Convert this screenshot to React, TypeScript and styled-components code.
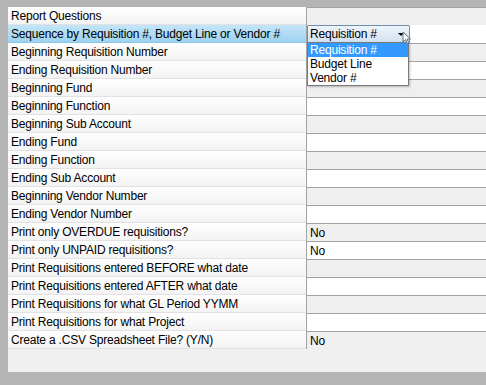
import styled, { createGlobalStyle } from 'styled-components';

const GlobalStyle = createGlobalStyle`
  html, body {
    margin: 0;
    padding: 0;
    background: #b4b4b4;
    font-family: "Liberation Sans", Arial, sans-serif;
  }
`

interface Question {
  label: string
  value?: string
}

const questions: Question[] = [
  { label: 'Report Questions' },
  { label: 'Sequence by Requisition #, Budget Line or Vendor #' },
  { label: 'Beginning Requisition Number' },
  { label: 'Ending Requisition Number' },
  { label: 'Beginning Fund' },
  { label: 'Beginning Function' },
  { label: 'Beginning Sub Account' },
  { label: 'Ending Fund' },
  { label: 'Ending Function' },
  { label: 'Ending Sub Account' },
  { label: 'Beginning Vendor Number' },
  { label: 'Ending Vendor Number' },
  { label: 'Print only OVERDUE requisitions?', value: 'No' },
  { label: 'Print only UNPAID requisitions?', value: 'No' },
  { label: 'Print Requisitions entered BEFORE what date' },
  { label: 'Print Requisitions entered AFTER what date' },
  { label: 'Print Requisitions for what GL Period YYMM' },
  { label: 'Print Requisitions for what Project' },
  { label: 'Create a .CSV Spreadsheet File? (Y/N)', value: 'No' },
]

const options = ['Requisition #', 'Budget Line', 'Vendor #']

const Frame = styled.div`
  padding: 7px 0 13px 8px;
`

const Panel = styled.div`
  background: #f0f0f0;
  height: 365px;
  display: flex;
  flex-direction: column;
`

const Row = styled.div`
  display: grid;
  grid-template-columns: 298px 1fr;
  height: 18px;
  font-size: 12px;
  letter-spacing: -0.2px;
  color: #000;
`

const Label = styled.div<{ $active?: boolean }>`
  display: flex;
  align-items: center;
  padding-left: 3px;
  padding-top: 1px;
  white-space: nowrap;
  border-bottom: 1px solid ${p => (p.$active ? '#8cc6e8' : '#e2e2e2')};
  background: ${p =>
    p.$active
      ? 'linear-gradient(#c4e5f8, #9dd2f0)'
      : 'linear-gradient(#ffffff, #f3f3f3)'};
`

const Value = styled.div<{ $shaded: boolean }>`
  position: relative;
  display: flex;
  align-items: center;
  padding-left: 3px;
  border-left: 1px solid #a3a3a3;
  border-top: 1px solid #a3a3a3;
  background: ${p => (p.$shaded ? '#efefef' : '#ffffff')};
`

const ComboCell = styled.div`
  position: relative;
  border-left: 1px solid #a3a3a3;
  background: #ffffff;
`

const Combo = styled.div`
  width: 99px;
  height: 16px;
  border: 1px solid #6f8fb0;
  border-radius: 1px;
  background: linear-gradient(#eef4fa, #d3e2f0);
  display: flex;
  align-items: center;
  padding-left: 2px;
  box-sizing: content-box;
  position: relative;
`

const Caret = styled.span`
  position: absolute;
  right: 5px;
  top: 7px;
  width: 0;
  height: 0;
  border-left: 3px solid transparent;
  border-right: 3px solid transparent;
  border-top: 3px solid #000;
`

const List = styled.div`
  position: absolute;
  left: 0;
  top: 17px;
  width: 100px;
  background: #ffffff;
  border: 1px solid #7a7a7a;
  box-shadow: 1px 1px 2px rgba(0, 0, 0, 0.25);
  z-index: 2;
`

const Option = styled.div<{ $selected?: boolean }>`
  height: 14px;
  line-height: 14px;
  padding-left: 2px;
  background: ${p => (p.$selected ? '#3399ff' : 'transparent')};
  color: ${p => (p.$selected ? '#ffffff' : '#000000')};
`

const Cursor = styled.svg`
  position: absolute;
  left: 95px;
  top: 6px;
  z-index: 3;
`

export default function App() {
  return (
    <>
      <GlobalStyle />
      <Frame>
        <Panel>
          {questions.map((q, i) =>
            i === 1 ? (
              <Row key={q.label}>
                <Label $active>{q.label}</Label>
                <ComboCell>
                  <Combo>
                    Requisition #
                    <Caret />
                  </Combo>
                  <List>
                    {options.map((o, j) => (
                      <Option key={o} $selected={j === 0}>{o}</Option>
                    ))}
                  </List>
                  <Cursor width="10" height="14" viewBox="0 0 10 14">
                    <path d="M1 1 L1 11 L3.5 8.5 L5.5 13 L7 12.3 L5 8 L8.5 8 Z" fill="#ffffff" stroke="#5a6e88" strokeWidth="1" strokeLinejoin="round" />
                  </Cursor>
                </ComboCell>
              </Row>
            ) : (
              <Row key={q.label}>
                <Label>{q.label}</Label>
                <Value $shaded={i % 2 === 0}>{q.value}</Value>
              </Row>
            )
          )}
        </Panel>
      </Frame>
    </>
  )
}
